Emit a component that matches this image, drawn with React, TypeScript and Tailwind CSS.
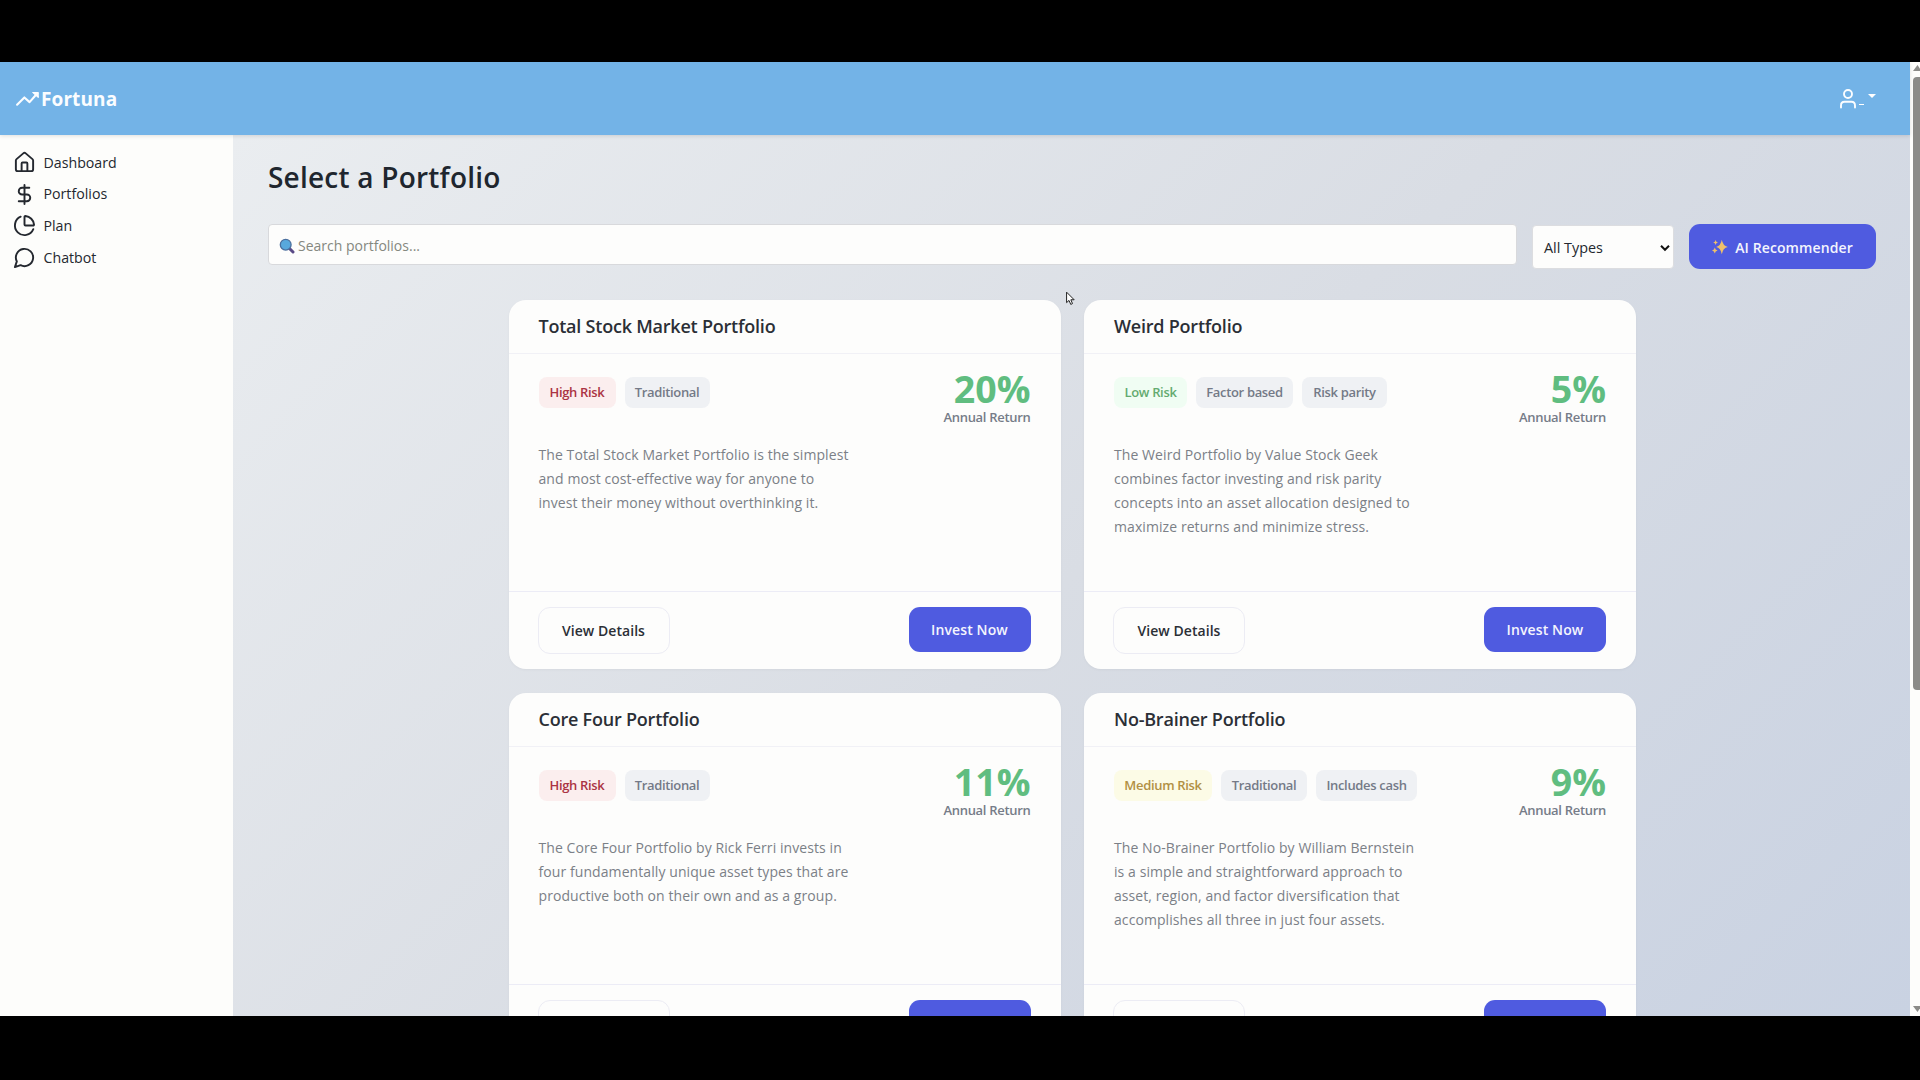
import React from "react";
import { House, DollarSign, ChartPie, User, TrendingUp } from "lucide-react";

type Tag = { label: string; box: string };
type Portfolio = { name: string; ret: string; tags: Tag[]; lines: string[] };

const gray = "bg-[#eff1f4] text-[#747a87]";
const red = "bg-[#fbeeee] text-[#ab3444]";
const green = "bg-[#f0fdf3] text-[#64ab70]";
const yellow = "bg-[#fcfbe6] text-[#b29044]";

const portfolios: Portfolio[] = [
  {
    name: "Total Stock Market Portfolio",
    ret: "20%",
    tags: [
      { label: "High Risk", box: `w-[77px] ${red}` },
      { label: "Traditional", box: `w-[85px] ${gray}` },
    ],
    lines: [
      "The Total Stock Market Portfolio is the simplest",
      "and most cost-effective way for anyone to",
      "invest their money without overthinking it.",
    ],
  },
  {
    name: "Weird Portfolio",
    ret: "5%",
    tags: [
      { label: "Low Risk", box: `w-[73px] ${green}` },
      { label: "Factor based", box: `w-[97px] ${gray}` },
      { label: "Risk parity", box: `w-[85px] ${gray}` },
    ],
    lines: [
      "The Weird Portfolio by Value Stock Geek",
      "combines factor investing and risk parity",
      "concepts into an asset allocation designed to",
      "maximize returns and minimize stress.",
    ],
  },
  {
    name: "Core Four Portfolio",
    ret: "11%",
    tags: [
      { label: "High Risk", box: `w-[77px] ${red}` },
      { label: "Traditional", box: `w-[85px] ${gray}` },
    ],
    lines: [
      "The Core Four Portfolio by Rick Ferri invests in",
      "four fundamentally unique asset types that are",
      "productive both on their own and as a group.",
    ],
  },
  {
    name: "No-Brainer Portfolio",
    ret: "9%",
    tags: [
      { label: "Medium Risk", box: `w-[98px] ${yellow}` },
      { label: "Traditional", box: `w-[86px] ${gray}` },
      { label: "Includes cash", box: `w-[101px] ${gray}` },
    ],
    lines: [
      "The No-Brainer Portfolio by William Bernstein",
      "is a simple and straightforward approach to",
      "asset, region, and factor diversification that",
      "accomplishes all three in just four assets.",
    ],
  },
];

function Card({ p }: { p: Portfolio }) {
  return (
    <article className="flex h-[369px] w-[552px] flex-col rounded-[17px] bg-[#fdfdfc] shadow-[0_1px_3px_rgba(0,0,0,0.04)]">
      <h2 className="flex h-[54px] shrink-0 items-center border-b border-[#f1f1f6] pl-[30px] text-[18px] font-semibold tracking-[-0.22px] text-[#2b2f36]">
        {p.name}
      </h2>
      <div className="flex-1 px-[30px] pt-[23px]">
        <div className="flex items-start justify-between">
          <div className="flex gap-[9px]">
            {p.tags.map((t) => (
              <span
                key={t.label}
                className={`flex h-[31px] items-center justify-center rounded-[8px] text-[13px] font-semibold tracking-[-0.33px] ${t.box}`}
              >
                {t.label}
              </span>
            ))}
          </div>
          <div className="flex flex-col items-end">
            <span className="-mt-[5px] text-[37.5px] leading-[34px] font-bold text-[#60bd80]">{p.ret}</span>
            <span className="mt-[1px] text-[13px] leading-[20px] font-semibold tracking-[-0.3px] text-[#767c88]">Annual Return</span>
          </div>
        </div>
        <div className="mt-[16px] text-[14px] leading-[24.1px] tracking-[0.08px] text-[#7b8087]">
          {p.lines.map((l) => (
            <p key={l} className="whitespace-nowrap">{l}</p>
          ))}
        </div>
      </div>
      <footer className="flex h-[78px] shrink-0 items-start justify-between border-t border-[#ececf6] pr-[30px] pl-[29px] pt-[15px]">
        <button className="h-[47px] w-[132px] rounded-[12px] border border-[#ececf4] text-[14px] font-semibold tracking-[0.05px] text-[#2b2f36]">
          View Details
        </button>
        <button className="h-[45px] w-[122px] rounded-[11px] bg-[#4f5be0] text-[14px] font-semibold tracking-[0.12px] text-[#f4f5fd]">
          Invest Now
        </button>
      </footer>
    </article>
  );
}

function ChatBubble() {
  return (
    <svg viewBox="0 0 24 24" className="size-[23px]" fill="none" stroke="currentColor" strokeWidth="2" strokeLinecap="round" strokeLinejoin="round">
      <path d="M7.9 20A9 9 0 1 0 4 16.1L2 22Z" />
    </svg>
  );
}

const nav = [
  { label: "Dashboard", icon: <House size={23} /> },
  { label: "Portfolios", icon: <DollarSign size={23} /> },
  { label: "Plan", icon: <ChartPie size={23} /> },
  { label: "Chatbot", icon: <ChatBubble /> },
];

export default function App() {
  return (
    <div className="relative flex h-[1080px] w-[1920px] flex-col overflow-hidden bg-black font-['Open_Sans',sans-serif]">
      <div className="mt-[62px] flex h-[954px] overflow-hidden">
        <div className="flex w-[1910px] flex-col">
          <header className="z-10 flex h-[73px] shrink-0 items-center justify-between bg-[#73b3e7] pr-[34px] pl-[15px] text-[#fbfdff] shadow-[0_1px_4px_rgba(0,0,0,0.12)]">
            <div className="flex items-center">
              <svg viewBox="0 0 24 24" className="h-[25px] w-[25px]" fill="none" stroke="currentColor" strokeWidth="2" strokeLinecap="round" strokeLinejoin="round">
                <path d="M2 18L9 11L14 15.5L21.5 7" />
                <path d="M17 6.2H22.3V11Z" fill="currentColor" strokeWidth="1" />
              </svg>
              <span className="mt-[1px] ml-[1px] text-[19px] font-bold tracking-[0.1px]">Fortuna</span>
            </div>
            <div className="flex items-center">
              <svg viewBox="0 0 16 20" className="mt-[1px] h-[20px] w-[16px]" fill="none" stroke="currentColor" strokeWidth="1.9" strokeLinecap="round">
                <circle cx="8" cy="5" r="4" />
                <path d="M1 18.5V16.5Q1 12.8 4.5 12.8H11.5Q15 12.8 15 16.5V18.5" />
              </svg>
              <span className="mt-[11px] ml-[3px] h-px w-[5px] bg-white" />
              <span className="-mt-[5px] ml-[4px] border-x-[4px] border-t-[4px] border-x-transparent border-t-white" />
            </div>
          </header>
          <div className="flex min-h-0 flex-1">
            <nav className="flex w-[233px] shrink-0 flex-col bg-[#fdfdfb] pt-[11.5px] pl-[13px] text-[#24282f]">
              {nav.map((n) => (
                <a key={n.label} className="flex h-[31.7px] items-center gap-[7.5px] text-[14.2px]">
                  {n.icon}
                  <span>{n.label}</span>
                </a>
              ))}
            </nav>
            <main className="min-w-0 flex-1 bg-[linear-gradient(135deg,#eaedf0_0%,#d9dde4_50%,#c9d2e2_100%)] pr-[34px] pl-[35px]">
              <h1 className="pt-[24px] text-[28px] leading-[36px] font-semibold tracking-[0.22px] text-[#20262e]">Select a Portfolio</h1>
              <div className="mt-[29px] flex h-[45px] items-start">
                <div className="flex h-[41px] w-[1249px] items-center rounded-[4px] border border-[#d8d9dc] bg-[#fdfdfc] pt-[1px] pl-[10px] text-[14px] text-[#85887f]">
                  <svg viewBox="0 0 16 16" className="mt-[2px] mr-[3px] size-[16px]">
                    <path d="M10.5 10.5L14 14" stroke="#5a4a86" strokeWidth="3" strokeLinecap="round" />
                    <circle cx="6.7" cy="6.7" r="5.4" fill="#58a8dc" stroke="#4b6f9e" strokeWidth="1.3" />
                  </svg>
                  Search portfolios...
                </div>
                <div className="ml-[15px] mt-[0.5px] flex h-[44.5px] w-[142px] items-center justify-between rounded-[4px] border border-[#dcdde0] bg-[#fdfdfc] pt-[2px] pr-[3px] pl-[11px] text-[14.4px] text-[#24282f]">
                  All Types
                  <svg viewBox="0 0 10 8" className="h-[8px] w-[10px]" fill="none" stroke="#111" strokeWidth="2">
                    <path d="M1 1.8L5 5.8L9 1.8" />
                  </svg>
                </div>
                <button className="ml-[15px] flex h-[45px] w-[187px] items-center justify-center rounded-[11px] bg-[#4f5be0] pt-[1px] text-[14px] font-semibold tracking-[0.1px] text-[#f4f5fd]">
                  <svg viewBox="0 0 16 16" className="mr-[7px] size-[16px]" fill="#efc06a">
                    <path d="M9.8 0.8Q10.9 6.9 15.8 8Q10.9 9.1 9.8 15.2Q8.7 9.1 4.2 8Q8.7 6.9 9.8 0.8Z" />
                    <path d="M3.6 1Q3.9 3.2 6 3.5Q3.9 3.8 3.6 6Q3.3 3.8 1.2 3.5Q3.3 3.2 3.6 1Z" />
                    <path d="M2.8 8.6Q3.2 11 5.6 11.5Q3.2 12 2.8 14.4Q2.4 12 0 11.5Q2.4 11 2.8 8.6Z" />
                  </svg>
                  AI Recommender
                </button>
              </div>
              <div className="mt-[31px] ml-[240.5px] grid w-[1128px] grid-cols-[552px_552px] gap-x-[23.5px] gap-y-[24px]">
                {portfolios.map((p) => (
                  <Card key={p.name} p={p} />
                ))}
              </div>
            </main>
          </div>
        </div>
        <div className="flex w-[10px] flex-col items-end bg-[#fdfdfb]">
          <svg viewBox="0 0 7 6" className="mt-[3px] h-[6px] w-[7px]" fill="#8b8b88"><path d="M4.5 0L8.5 6H0Z" /></svg>
          <div className="mt-[6px] h-[613px] w-[7px] rounded-l-[4px] bg-[#8b8b88]" />
          <div className="flex-1" />
          <svg viewBox="0 0 7 6" className="mb-[4px] h-[6px] w-[7px]" fill="#8b8b88"><path d="M4.5 6L8.5 0H0Z" /></svg>
        </div>
      </div>
      <svg viewBox="0 0 12 17" className="absolute top-[291px] left-[1066px] h-[15px] w-[10px]" fill="#fff" stroke="#222" strokeWidth="1.2">
        <path d="M0.7 0.9V13.5L3.6 10.8L5.7 15.6L7.8 14.6L5.8 10H9.8Z" />
      </svg>
    </div>
  );
}
